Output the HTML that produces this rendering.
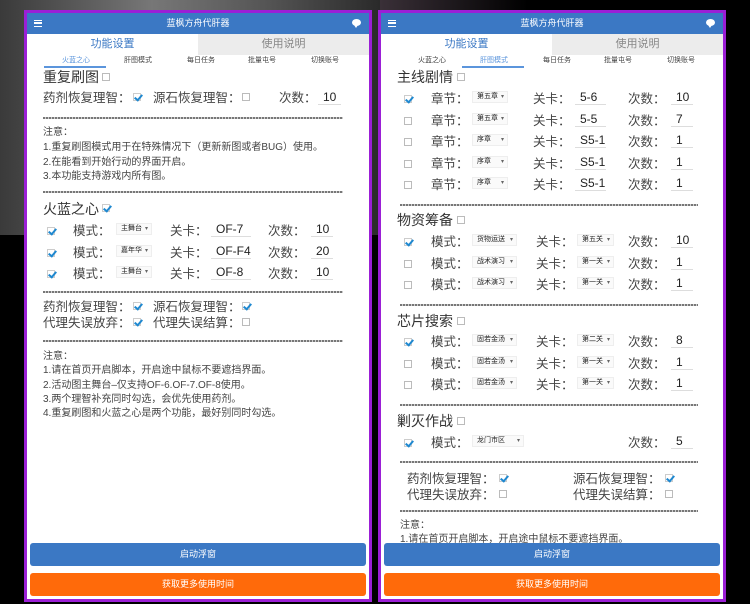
<!DOCTYPE html><html><head><meta charset="utf-8"><style>
*{margin:0;padding:0;box-sizing:border-box}
body{width:750px;height:604px;overflow:hidden;background:#000;font-family:"Liberation Sans","Noto Sans CJK SC",sans-serif;position:relative;color:#333}
.bg1{position:absolute;left:0;top:0;width:380px;height:235px;background:linear-gradient(90deg,#3a3a3a,#777 40%,#555 70%,#2a2a2a)}
.bg2{position:absolute;left:380px;top:0;width:370px;height:120px;background:linear-gradient(90deg,#3a3038,#000 40%)}
.p{position:absolute;top:10px;width:348px;height:592px;border:3px solid #9b1fd6;background:#fff;overflow:hidden}
.hd{position:absolute;left:0;top:0;right:0;height:21px;background:#3b78c4;color:#fff;font-size:9px;text-align:center;line-height:21px}
.hm{position:absolute;left:7px;top:7px;width:8px;height:7px;border-top:1.5px solid #fff;border-bottom:1.5px solid #fff}
.hm:after{content:"";position:absolute;left:0;top:1.3px;width:8px;height:1.5px;background:#fff}
.bub{position:absolute;right:8px;top:6px;width:9px;height:7px;background:#fff;border-radius:50%}
.bub:after{content:"";position:absolute;left:2px;bottom:-2px;border:2px solid transparent;border-top:3px solid #fff;border-bottom:0}
.t1,.t2{position:absolute;top:21px;height:21px;width:50%;font-size:11px;text-align:center;line-height:21px}
.t1{left:0;color:#3b78c4}.t2{right:0;background:#ececec;color:#888}
.st{position:absolute;top:44px;font-size:7px;color:#444;line-height:8px}
.ul{position:absolute;top:53px;height:2px;background:#5b95dc}
.a{position:absolute;white-space:nowrap;line-height:1}
.h{font-size:14px;color:#333}
.l{font-size:12.5px;color:#444}
.n{font-size:10px;color:#444}
.cb{position:absolute;width:8px;height:8px;border:1px solid #bbb;background:#fff}
.ck{position:absolute;width:8px;height:8px;border:1px solid #ccc;background:#fff}
.ck:after{content:"";position:absolute;left:2px;top:-1px;width:3px;height:6px;border:solid #1e88d0;border-width:0 2px 2px 0;transform:rotate(40deg)}
.sel{position:absolute;height:12px;border:1px solid #eee;background:#fafafa;font-size:7px;line-height:10px;padding-left:4px;color:#222}
.sel:after{content:"▾";position:absolute;right:3px;top:0;font-size:6px;color:#666}
.in{position:absolute;height:16px;border-bottom:1px solid #ddd;font-size:12px;line-height:16px;padding-left:5px;color:#222}
.dl{position:absolute;height:1.5px;background:repeating-linear-gradient(90deg,#777 0 2px,#ccc 2px 3px)}
.btn{position:absolute;left:3px;right:3px;height:23px;border-radius:3px;color:#fff;font-size:9px;text-align:center;line-height:23px}
</style></head><body>
<div class="bg1"></div><div class="bg2"></div>

<!-- LEFT PANEL -->
<div class="p" style="left:24px">
<div class="hd"><div class="hm"></div>蓝枫方舟代肝器<div class="bub"></div></div>
<div class="t1">功能设置</div><div class="t2">使用说明</div>
<div class="st" style="left:35px;color:#5b95dc">火蓝之心</div><div class="st" style="left:97px">肝图模式</div><div class="st" style="left:160px">每日任务</div><div class="st" style="left:221px">批量屯号</div><div class="st" style="left:284px">切换账号</div>
<div class="ul" style="left:17px;width:62px"></div>
<div class="a h" style="left:16px;top:57px">重复刷图</div><div class="cb" style="left:75px;top:60px"></div>
<div class="a l" style="left:16px;top:79px">药剂恢复理智：</div><div class="ck" style="left:106px;top:80px"></div>
<div class="a l" style="left:126px;top:79px">源石恢复理智：</div><div class="cb" style="left:215px;top:80px"></div>
<div class="a l" style="left:252px;top:79px">次数：</div><div class="in" style="left:291px;top:76px;width:23px">10</div>
<div class="dl" style="left:16px;width:300px;top:104px"></div>
<div class="a n" style="left:16px;top:115px">注意：</div>
<div class="a n" style="left:16px;top:130px">1.重复刷图模式用于在特殊情况下（更新新图或者BUG）使用。</div>
<div class="a n" style="left:16px;top:145px">2.在能看到开始行动的界面开启。</div>
<div class="a n" style="left:16px;top:159px">3.本功能支持游戏内所有图。</div>
<div class="dl" style="left:16px;width:300px;top:178px"></div>
<div class="a h" style="left:16px;top:189px">火蓝之心</div><div class="ck" style="left:75px;top:191px"></div>
<div class="ck" style="left:20px;top:214px"></div><div class="a l" style="left:46px;top:212px">模式：</div><div class="sel" style="left:89px;top:210px;width:36px">主舞台</div><div class="a l" style="left:143px;top:212px">关卡：</div><div class="in" style="left:184px;top:208px;width:40px">OF-7</div><div class="a l" style="left:241px;top:212px">次数：</div><div class="in" style="left:284px;top:208px;width:22px">10</div>
<div class="ck" style="left:20px;top:236px"></div><div class="a l" style="left:46px;top:234px">模式：</div><div class="sel" style="left:89px;top:232px;width:36px">嘉年华</div><div class="a l" style="left:143px;top:234px">关卡：</div><div class="in" style="left:184px;top:230px;width:40px">OF-F4</div><div class="a l" style="left:241px;top:234px">次数：</div><div class="in" style="left:284px;top:230px;width:22px">20</div>
<div class="ck" style="left:20px;top:257px"></div><div class="a l" style="left:46px;top:255px">模式：</div><div class="sel" style="left:89px;top:253px;width:36px">主舞台</div><div class="a l" style="left:143px;top:255px">关卡：</div><div class="in" style="left:184px;top:251px;width:40px">OF-8</div><div class="a l" style="left:241px;top:255px">次数：</div><div class="in" style="left:284px;top:251px;width:22px">10</div>
<div class="dl" style="left:16px;width:300px;top:278px"></div>
<div class="a l" style="left:16px;top:288px">药剂恢复理智：</div><div class="ck" style="left:106px;top:289px"></div>
<div class="a l" style="left:126px;top:288px">源石恢复理智：</div><div class="ck" style="left:215px;top:289px"></div>
<div class="a l" style="left:16px;top:304px">代理失误放弃：</div><div class="ck" style="left:106px;top:305px"></div>
<div class="a l" style="left:126px;top:304px">代理失误结算：</div><div class="cb" style="left:215px;top:305px"></div>
<div class="dl" style="left:16px;width:300px;top:327px"></div>
<div class="a n" style="left:16px;top:339px">注意：</div>
<div class="a n" style="left:16px;top:353px">1.请在首页开启脚本，开启途中鼠标不要遮挡界面。</div>
<div class="a n" style="left:16px;top:368px">2.活动图主舞台–仅支持OF-6.OF-7.OF-8使用。</div>
<div class="a n" style="left:16px;top:382px">3.两个理智补充同时勾选，会优先使用药剂。</div>
<div class="a n" style="left:16px;top:396px">4.重复刷图和火蓝之心是两个功能，最好别同时勾选。</div>
<div class="btn" style="top:530px;background:#3b78c4">启动浮窗</div>
<div class="btn" style="top:560px;background:#ff6a0a">获取更多使用时间</div>
</div>

<!-- RIGHT PANEL -->
<div class="p" style="left:378px">
<div class="hd"><div class="hm"></div>蓝枫方舟代肝器<div class="bub"></div></div>
<div class="t1">功能设置</div><div class="t2">使用说明</div>
<div class="st" style="left:37px">火蓝之心</div><div class="st" style="left:99px;color:#5b95dc">肝图模式</div><div class="st" style="left:162px">每日任务</div><div class="st" style="left:223px">批量屯号</div><div class="st" style="left:286px">切换账号</div>
<div class="ul" style="left:81px;width:62px"></div>
<div class="a h" style="left:16px;top:57px">主线剧情</div><div class="cb" style="left:76px;top:60px"></div>
<div class="ck" style="left:23px;top:82px"></div><div class="a l" style="left:50px;top:80px">章节：</div><div class="sel" style="left:91px;top:78px;width:36px">第五章</div><div class="a l" style="left:152px;top:80px">关卡：</div><div class="in" style="left:194px;top:76px;width:31px">5-6</div><div class="a l" style="left:247px;top:80px">次数：</div><div class="in" style="left:290px;top:76px;width:22px">10</div>
<div class="cb" style="left:23px;top:104px"></div><div class="a l" style="left:50px;top:102px">章节：</div><div class="sel" style="left:91px;top:100px;width:36px">第五章</div><div class="a l" style="left:152px;top:102px">关卡：</div><div class="in" style="left:194px;top:98px;width:31px">5-5</div><div class="a l" style="left:247px;top:102px">次数：</div><div class="in" style="left:290px;top:98px;width:22px">7</div>
<div class="cb" style="left:23px;top:125px"></div><div class="a l" style="left:50px;top:123px">章节：</div><div class="sel" style="left:91px;top:121px;width:36px">序章</div><div class="a l" style="left:152px;top:123px">关卡：</div><div class="in" style="left:194px;top:119px;width:31px">S5-1</div><div class="a l" style="left:247px;top:123px">次数：</div><div class="in" style="left:290px;top:119px;width:22px">1</div>
<div class="cb" style="left:23px;top:147px"></div><div class="a l" style="left:50px;top:145px">章节：</div><div class="sel" style="left:91px;top:143px;width:36px">序章</div><div class="a l" style="left:152px;top:145px">关卡：</div><div class="in" style="left:194px;top:141px;width:31px">S5-1</div><div class="a l" style="left:247px;top:145px">次数：</div><div class="in" style="left:290px;top:141px;width:22px">1</div>
<div class="cb" style="left:23px;top:168px"></div><div class="a l" style="left:50px;top:166px">章节：</div><div class="sel" style="left:91px;top:164px;width:36px">序章</div><div class="a l" style="left:152px;top:166px">关卡：</div><div class="in" style="left:194px;top:162px;width:31px">S5-1</div><div class="a l" style="left:247px;top:166px">次数：</div><div class="in" style="left:290px;top:162px;width:22px">1</div>
<div class="dl" style="left:19px;width:298px;top:191px"></div>
<div class="a h" style="left:16px;top:200px">物资筹备</div><div class="cb" style="left:76px;top:203px"></div>
<div class="ck" style="left:23px;top:225px"></div><div class="a l" style="left:50px;top:223px">模式：</div><div class="sel" style="left:91px;top:221px;width:45px">货物运送</div><div class="a l" style="left:155px;top:223px">关卡：</div><div class="sel" style="left:196px;top:221px;width:37px">第五关</div><div class="a l" style="left:247px;top:223px">次数：</div><div class="in" style="left:290px;top:219px;width:22px">10</div>
<div class="cb" style="left:23px;top:247px"></div><div class="a l" style="left:50px;top:245px">模式：</div><div class="sel" style="left:91px;top:243px;width:45px">战术演习</div><div class="a l" style="left:155px;top:245px">关卡：</div><div class="sel" style="left:196px;top:243px;width:37px">第一关</div><div class="a l" style="left:247px;top:245px">次数：</div><div class="in" style="left:290px;top:241px;width:22px">1</div>
<div class="cb" style="left:23px;top:268px"></div><div class="a l" style="left:50px;top:266px">模式：</div><div class="sel" style="left:91px;top:264px;width:45px">战术演习</div><div class="a l" style="left:155px;top:266px">关卡：</div><div class="sel" style="left:196px;top:264px;width:37px">第一关</div><div class="a l" style="left:247px;top:266px">次数：</div><div class="in" style="left:290px;top:262px;width:22px">1</div>
<div class="dl" style="left:19px;width:298px;top:291px"></div>
<div class="a h" style="left:16px;top:301px">芯片搜索</div><div class="cb" style="left:76px;top:304px"></div>
<div class="ck" style="left:23px;top:325px"></div><div class="a l" style="left:50px;top:323px">模式：</div><div class="sel" style="left:91px;top:321px;width:45px">固若金汤</div><div class="a l" style="left:155px;top:323px">关卡：</div><div class="sel" style="left:196px;top:321px;width:37px">第二关</div><div class="a l" style="left:247px;top:323px">次数：</div><div class="in" style="left:290px;top:319px;width:22px">8</div>
<div class="cb" style="left:23px;top:347px"></div><div class="a l" style="left:50px;top:345px">模式：</div><div class="sel" style="left:91px;top:343px;width:45px">固若金汤</div><div class="a l" style="left:155px;top:345px">关卡：</div><div class="sel" style="left:196px;top:343px;width:37px">第一关</div><div class="a l" style="left:247px;top:345px">次数：</div><div class="in" style="left:290px;top:341px;width:22px">1</div>
<div class="cb" style="left:23px;top:368px"></div><div class="a l" style="left:50px;top:366px">模式：</div><div class="sel" style="left:91px;top:364px;width:45px">固若金汤</div><div class="a l" style="left:155px;top:366px">关卡：</div><div class="sel" style="left:196px;top:364px;width:37px">第一关</div><div class="a l" style="left:247px;top:366px">次数：</div><div class="in" style="left:290px;top:362px;width:22px">1</div>
<div class="dl" style="left:19px;width:298px;top:391px"></div>
<div class="a h" style="left:16px;top:401px">剿灭作战</div><div class="cb" style="left:76px;top:404px"></div>
<div class="ck" style="left:23px;top:426px"></div><div class="a l" style="left:50px;top:424px">模式：</div><div class="sel" style="left:91px;top:422px;width:52px">龙门市区</div><div class="a l" style="left:247px;top:424px">次数：</div><div class="in" style="left:290px;top:420px;width:22px">5</div>
<div class="dl" style="left:19px;width:298px;top:448px"></div>
<div class="a l" style="left:26px;top:460px">药剂恢复理智：</div><div class="ck" style="left:118px;top:461px"></div>
<div class="a l" style="left:192px;top:460px">源石恢复理智：</div><div class="ck" style="left:284px;top:461px"></div>
<div class="a l" style="left:26px;top:476px">代理失误放弃：</div><div class="cb" style="left:118px;top:477px"></div>
<div class="a l" style="left:192px;top:476px">代理失误结算：</div><div class="cb" style="left:284px;top:477px"></div>
<div class="dl" style="left:19px;width:298px;top:497px"></div>
<div class="a n" style="left:19px;top:508px">注意：</div>
<div class="a n" style="left:19px;top:522px">1.请在首页开启脚本，开启途中鼠标不要遮挡界面。</div>
<div class="btn" style="top:530px;background:#3b78c4">启动浮窗</div>
<div class="btn" style="top:560px;background:#ff6a0a">获取更多使用时间</div>
</div>
</body></html>
